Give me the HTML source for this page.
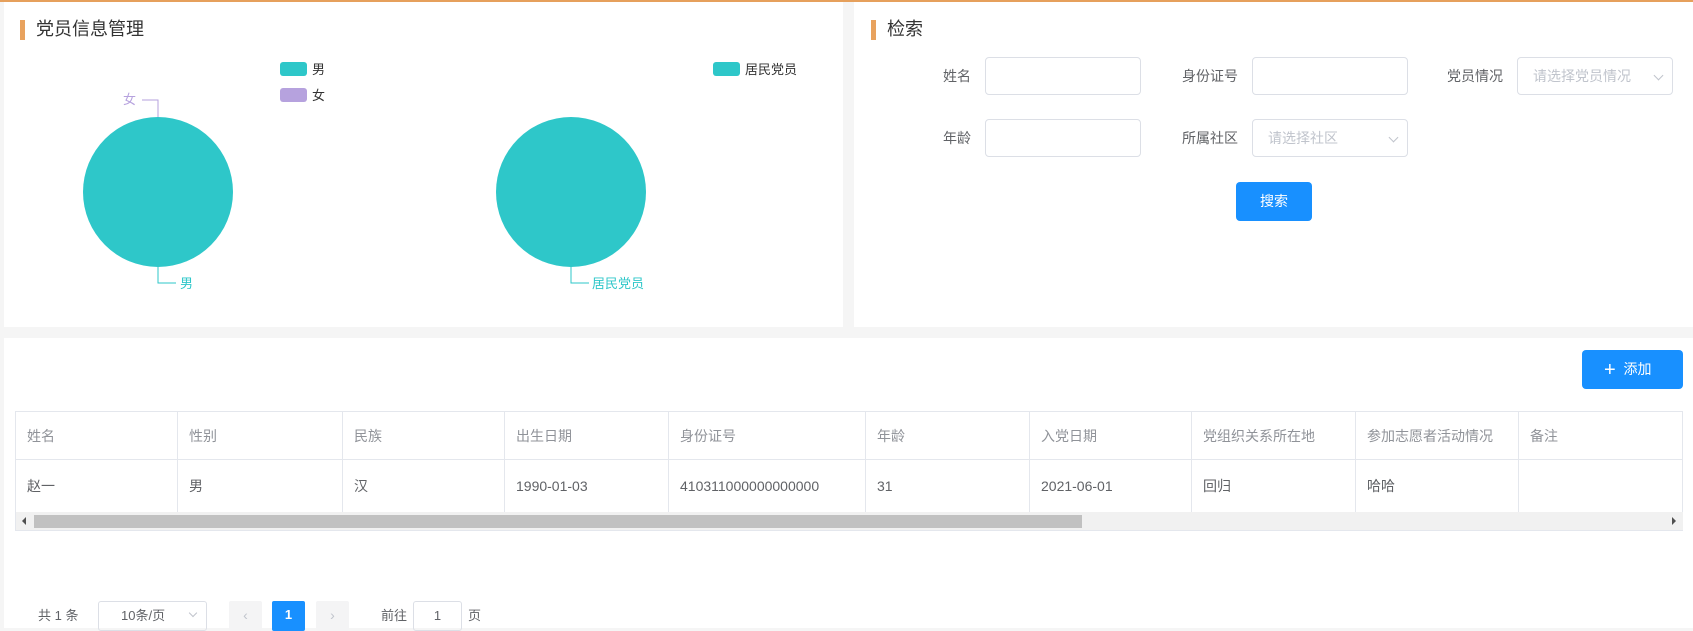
<!DOCTYPE html>
<html><head><meta charset="utf-8"><style>
*{box-sizing:border-box;margin:0;padding:0}
body{width:1693px;height:623px;background:#f5f5f5;font-family:"Liberation Sans","Noto Sans CJK SC",sans-serif;position:relative;overflow:hidden;color:#606266;font-size:14px}
.a{position:absolute}
.panel{position:absolute;background:#fff}
.bar{position:absolute;width:5px;height:20px;background:#e8a25e}
.title{position:absolute;font-size:18px;color:#333;line-height:20px}
.lbl{position:absolute;font-size:14px;color:#606266;line-height:38px;text-align:right}
.inp{position:absolute;border:1px solid #dcdfe6;border-radius:4px;background:#fff;height:38px;width:156px;color:#c0c4cc;line-height:36px;padding-left:15px}
.arr{position:absolute;right:10px;top:14px;width:7px;height:7px;border-right:1px solid #c0c4cc;border-bottom:1px solid #c0c4cc;transform:rotate(45deg)}
.cell{position:absolute;border-right:1px solid #e4e7ed;padding-left:11px;white-space:nowrap}
.hd{color:#909399;line-height:48px;top:412px;height:47px}
.rw{color:#606266;line-height:52px;top:460px;height:52px}
</style></head><body>
<div class="a" style="left:0;top:0;width:1693px;height:2px;background:#e6a05c"></div>
<div class="panel" style="left:4px;top:2px;width:839px;height:325px"></div>
<div class="panel" style="left:854px;top:2px;width:839px;height:325px"></div>
<div class="panel" style="left:4px;top:338px;width:1689px;height:290px"></div>

<div class="bar" style="left:20px;top:20px"></div>
<div class="title" style="left:36px;top:19px">党员信息管理</div>

<svg class="a" style="left:0;top:0" width="843" height="327">
<circle cx="158" cy="192" r="75" fill="#2ec7c9"/>
<circle cx="571" cy="192" r="75" fill="#2ec7c9"/>
<polyline points="142,100 158,100 158,117" fill="none" stroke="#b6a2de"/>
<polyline points="158,267 158,283 176,283" fill="none" stroke="#2ec7c9"/>
<polyline points="571,267 571,283 589,283" fill="none" stroke="#2ec7c9"/>
<rect x="280" y="62" width="27" height="14" rx="3" fill="#2ec7c9"/>
<rect x="280" y="88" width="27" height="14" rx="3" fill="#b6a2de"/>
<rect x="713" y="62" width="27" height="14" rx="3" fill="#2ec7c9"/>
<g font-family="Liberation Sans,Noto Sans CJK SC,sans-serif" font-size="13">
<text x="312" y="74" fill="#333">男</text>
<text x="312" y="100" fill="#333">女</text>
<text x="745" y="74" fill="#333">居民党员</text>
<text x="123" y="104" fill="#b6a2de">女</text>
<text x="180" y="288" fill="#2ec7c9">男</text>
<text x="592" y="288" fill="#2ec7c9">居民党员</text>
</g>
</svg>

<div class="bar" style="left:871px;top:20px"></div>
<div class="title" style="left:887px;top:19px">检索</div>
<div class="lbl" style="left:900px;top:57px;width:71px">姓名</div>
<div class="inp" style="left:985px;top:57px"></div>
<div class="lbl" style="left:1150px;top:57px;width:88px">身份证号</div>
<div class="inp" style="left:1252px;top:57px"></div>
<div class="lbl" style="left:1420px;top:57px;width:83px">党员情况</div>
<div class="inp" style="left:1517px;top:57px">请选择党员情况<span class="arr"></span></div>
<div class="lbl" style="left:900px;top:119px;width:71px">年龄</div>
<div class="inp" style="left:985px;top:119px"></div>
<div class="lbl" style="left:1150px;top:119px;width:88px">所属社区</div>
<div class="inp" style="left:1252px;top:119px">请选择社区<span class="arr"></span></div>
<div class="a" style="left:1236px;top:182px;width:76px;height:39px;background:#1890ff;border-radius:4px;color:#fff;text-align:center;line-height:39px;font-size:14px">搜索</div>

<div class="a" style="left:1582px;top:350px;width:101px;height:39px;background:#1890ff;border-radius:4px;color:#fff;line-height:39px;font-size:14px;padding-left:22px"><span style="font-size:20px;vertical-align:-2px">+</span>&nbsp;&nbsp;添加</div>

<div class="a" style="left:15px;top:411px;width:1668px;height:120px;border:1px solid #e4e7ed"></div>
<div class="a" style="left:16px;top:459px;width:1667px;height:1px;background:#e4e7ed"></div>
<div class="a" style="left:16px;top:512px;width:1667px;height:18px;background:#f1f1f1"></div>
<div class="a" style="left:34px;top:515px;width:1048px;height:13px;background:#c1c1c1"></div>
<div class="a" style="left:22px;top:517px;width:0;height:0;border-top:4px solid transparent;border-bottom:4px solid transparent;border-right:4px solid #505050"></div>
<div class="a" style="left:1672px;top:517px;width:0;height:0;border-top:4px solid transparent;border-bottom:4px solid transparent;border-left:4px solid #505050"></div>

<div class="cell hd" style="left:16px;width:162px">姓名</div>
<div class="cell hd" style="left:178px;width:165px">性别</div>
<div class="cell hd" style="left:343px;width:162px">民族</div>
<div class="cell hd" style="left:505px;width:164px">出生日期</div>
<div class="cell hd" style="left:669px;width:197px">身份证号</div>
<div class="cell hd" style="left:866px;width:164px">年龄</div>
<div class="cell hd" style="left:1030px;width:162px">入党日期</div>
<div class="cell hd" style="left:1192px;width:164px">党组织关系所在地</div>
<div class="cell hd" style="left:1356px;width:163px">参加志愿者活动情况</div>
<div class="cell hd" style="left:1519px;width:164px;border-right:0">备注</div>
<div class="cell rw" style="left:16px;width:162px">赵一</div>
<div class="cell rw" style="left:178px;width:165px">男</div>
<div class="cell rw" style="left:343px;width:162px">汉</div>
<div class="cell rw" style="left:505px;width:164px">1990-01-03</div>
<div class="cell rw" style="left:669px;width:197px">410311000000000000</div>
<div class="cell rw" style="left:866px;width:164px">31</div>
<div class="cell rw" style="left:1030px;width:162px">2021-06-01</div>
<div class="cell rw" style="left:1192px;width:164px">回归</div>
<div class="cell rw" style="left:1356px;width:163px">哈哈</div>
<div class="cell rw" style="left:1519px;width:164px;border-right:0"></div>

<div class="a" style="left:38px;top:606px;font-size:13px;line-height:20px">共 1 条</div>
<div class="a" style="left:98px;top:601px;width:109px;height:30px;border:1px solid #dcdfe6;border-radius:3px;font-size:13px;line-height:28px;padding-left:22px">10条/页<span class="arr" style="top:8px;width:6px;height:6px"></span></div>
<div class="a" style="left:229px;top:601px;width:33px;height:30px;background:#f4f4f5;border-radius:2px;color:#c0c4cc;text-align:center;line-height:28px">&lsaquo;</div>
<div class="a" style="left:272px;top:601px;width:33px;height:30px;background:#1890ff;border-radius:2px;color:#fff;text-align:center;line-height:28px;font-weight:bold;font-size:13px">1</div>
<div class="a" style="left:316px;top:601px;width:33px;height:30px;background:#f4f4f5;border-radius:2px;color:#c0c4cc;text-align:center;line-height:28px">&rsaquo;</div>
<div class="a" style="left:381px;top:606px;font-size:13px;line-height:20px">前往</div>
<div class="a" style="left:413px;top:601px;width:49px;height:30px;border:1px solid #dcdfe6;border-radius:3px;text-align:center;font-size:13px;line-height:28px">1</div>
<div class="a" style="left:468px;top:606px;font-size:13px;line-height:20px">页</div>
</body></html>
